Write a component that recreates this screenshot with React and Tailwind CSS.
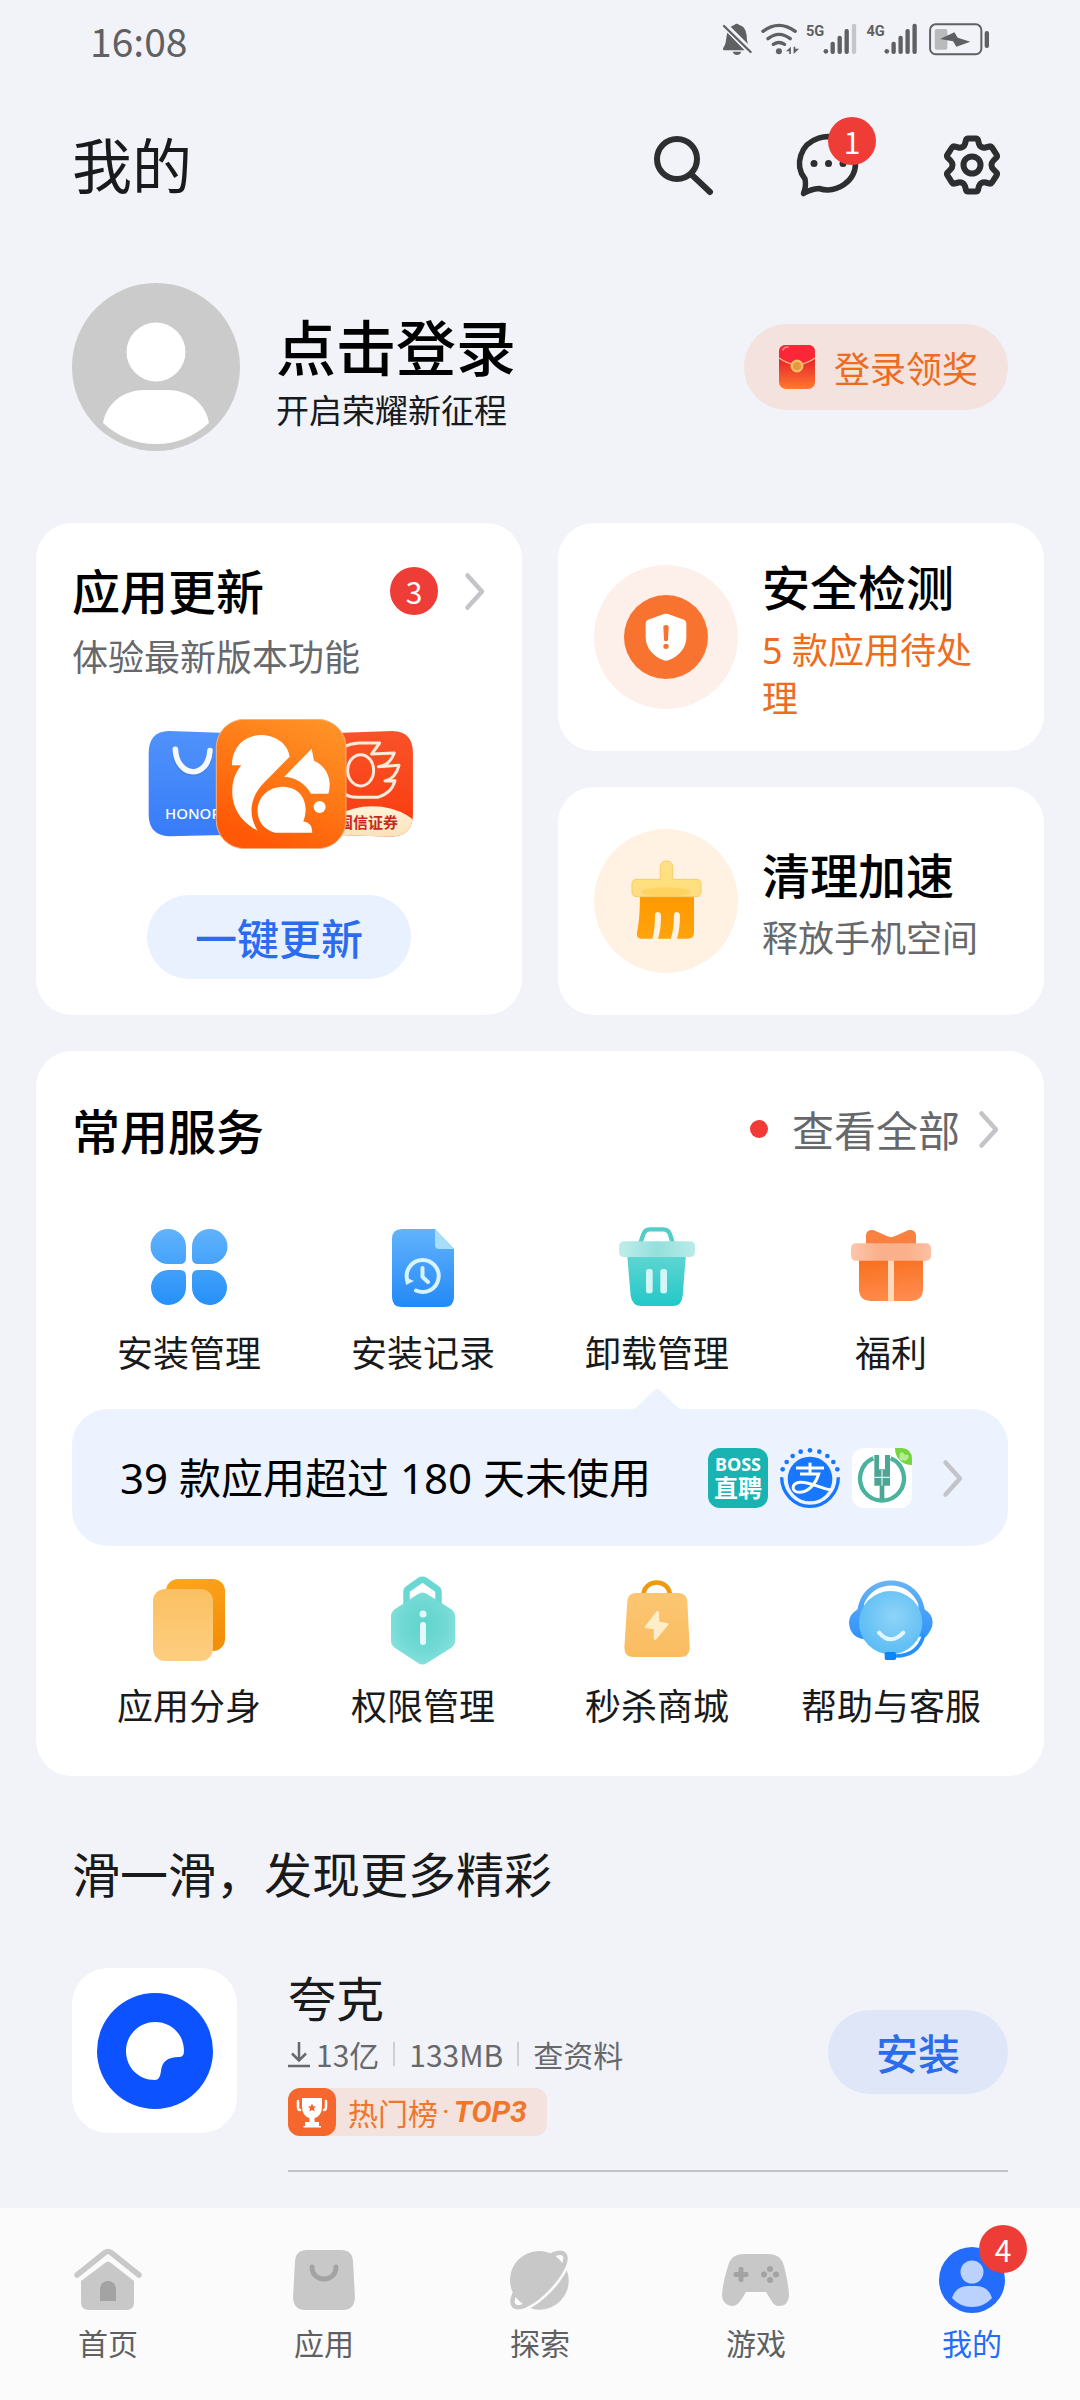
import React, { useState } from "react";

function Badge({ count, className = "" }) {
  return (
    <span
      className={`flex h-12 w-12 shrink-0 items-center justify-center rounded-full bg-[#ee3d37] text-[30px] leading-[48px] font-normal text-white ${className}`}
    >
      {count}
    </span>
  );
}

function Chevron() {
  return (
    <svg className="h-12 w-6 shrink-0" viewBox="0 0 24 48" fill="none" stroke="#c3c4c7" strokeWidth="4.500" strokeLinecap="round" strokeLinejoin="round">
      <path d="M5.500 8.500 L20 24.500 L5.500 40.500" />
    </svg>
  );
}

function StatusIcons() {
  return (
    <svg className="h-10 w-[273px]" viewBox="60 30 820 120" fill="#5f6062" aria-hidden="true">
      {/* muted bell */}
      <path d="M82 68 C78 80 80 100 70 113 Q66 121 76 121 L134 121 Z" />
      <path d="M92 50 Q98 47 103 45 Q110 37 118 45 Q138 50 140 76 Q140 92 144 102 Z" />
      <path d="M98 125 H124 Q120 135 111 135 Q102 135 98 125 Z" />
      <path d="M72 48 L152 126" stroke="#5f6062" strokeWidth="7" strokeLinecap="round" />
      {/* wifi */}
      <g fill="none" stroke="#5f6062" strokeWidth="10" strokeLinecap="round">
        <path d="M189 64 Q237 28 286 64" />
        <path d="M204 86 Q237 60 271 86" />
        <path d="M220 103 Q237 92 254 103" />
      </g>
      <circle cx="237" cy="124" r="9" />
      <path d="M273 110 V132 H268 V124 H258 Z M281 132 V110 H286 V116 H298 Z" />
      {/* first signal */}
      <text x="318" y="78" fontSize="44" fontWeight="700" fontFamily="Roboto, sans-serif">5G</text>
      <circle cx="378" cy="124" r="7" />
      <rect x="392" y="95" width="13" height="37" rx="6" />
      <rect x="413" y="77" width="13" height="55" rx="6" />
      <rect x="434" y="57" width="13" height="75" rx="6" />
      <rect x="456" y="41" width="13" height="91" rx="6" fill="#c5c6c9" />
      {/* second signal */}
      <text x="500" y="78" fontSize="44" fontWeight="700" fontFamily="Roboto, sans-serif">4G</text>
      <circle cx="561" cy="124" r="7" />
      <rect x="575" y="95" width="13" height="37" rx="6" />
      <rect x="596" y="77" width="13" height="55" rx="6" />
      <rect x="617" y="57" width="13" height="75" rx="6" />
      <rect x="638" y="41" width="13" height="91" rx="6" />
      {/* battery */}
      <rect x="691" y="43" width="154" height="90" rx="17" fill="none" stroke="#5f6062" strokeWidth="6" />
      <rect x="705" y="57" width="38" height="62" rx="6" fill="#b9babc" />
      <path d="M721 87 L764 67 L774 83 L812 95 L770 110 L760 94 Z" />
      <rect x="855" y="63" width="13" height="51" rx="6" />
    </svg>
  );
}

function SearchIcon() {
  return (
    <svg className="h-[72px] w-[72px]" viewBox="0 0 72 72" fill="none" stroke="#2c2e30" strokeLinecap="round">
      <circle cx="29" cy="30" r="20" strokeWidth="6" />
      <path d="M44 46 L62 63" strokeWidth="6" />
    </svg>
  );
}

function MessageIcon() {
  return (
    <svg className="h-[72px] w-[72px]" viewBox="0 0 72 72" fill="none" stroke="#2c2e30" strokeWidth="5.500" strokeLinejoin="round">
      <path d="M13 50 A28 26.500 0 1 1 27 59.500 Q19 60 11.500 64.500 Q14.500 57 13 50 Z" />
      <g fill="#2c2e30" stroke="none">
        <circle cx="22" cy="34.500" r="3.500" />
        <circle cx="36.500" cy="34.500" r="3.500" />
        <circle cx="51" cy="34.500" r="3.500" />
      </g>
    </svg>
  );
}

function GearIcon() {
  return (
    <svg className="h-[72px] w-[72px]" viewBox="0 0 72 72" fill="none" stroke="#2c2e30" strokeWidth="6" strokeLinejoin="round">
      <path d="M32 9.500 H40 Q41.500 9.500 42 11 L43 15 Q43.500 17 45.500 18 Q47.500 19 49.500 18.500 L53.500 17.500 Q55 17 56 18.500 L60.500 25.500 Q61.500 27 60.500 28.500 L57.500 31.500 Q55.500 33.500 55.500 36 Q55.500 38.500 57.500 40.500 L60.500 43.500 Q61.500 45 60.500 46.500 L56 53.500 Q55 55 53.500 54.500 L49.500 53.500 Q47.500 53 45.500 54 Q43.500 55 43 57 L42 61 Q41.500 62.500 40 62.500 H32 Q30.500 62.500 30 61 L29 57 Q28.500 55 26.500 54 Q24.500 53 22.500 53.500 L18.500 54.500 Q17 55 16 53.500 L11.500 46.500 Q10.500 45 11.500 43.500 L14.500 40.500 Q16.500 38.500 16.500 36 Q16.500 33.500 14.500 31.500 L11.500 28.500 Q10.500 27 11.500 25.500 L16 18.500 Q17 17 18.500 17.500 L22.500 18.500 Q24.500 19 26.500 18 Q28.500 17 29 15 L30 11 Q30.500 9.500 32 9.500 Z" />
      <circle cx="36" cy="36" r="8.500" />
    </svg>
  );
}

function Avatar() {
  return (
    <svg className="h-[168px] w-[168px] shrink-0" viewBox="0 0 168 168">
      <circle cx="84" cy="84" r="84" fill="#cbcbcb" />
      <circle cx="84" cy="69" r="29.500" fill="#fff" />
      <path d="M31 140 C34 122 50 107 72 107 H96 C118 107 134 122 137 140 Q114 161 84 161 Q54 161 31 140 Z" fill="#fff" />
    </svg>
  );
}

function RedEnvelope() {
  return (
    <svg className="h-[46px] w-[38px]" viewBox="0 0 38 46">
      <defs>
        <linearGradient id="env" x1="0" y1="0" x2="0" y2="1">
          <stop offset="0.350" stopColor="#e8262c" />
          <stop offset="1" stopColor="#ff7a2e" />
        </linearGradient>
      </defs>
      <rect x="1" y="1" width="36" height="44" rx="7" fill="url(#env)" />
      <path d="M1 8 Q1 1 8 1 H30 Q37 1 37 8 V14 Q19 26 1 14 Z" fill="#fb2638" />
      <path d="M1 14 Q19 27 37 14" fill="none" stroke="#f7c07a" strokeWidth="1.500" />
      <path d="M5 6 Q6 3 10 3" fill="none" stroke="#ff8f95" strokeWidth="1.500" strokeLinecap="round" />
      <circle cx="19" cy="22" r="6.500" fill="#f4bd62" />
      <circle cx="19" cy="22" r="4" fill="#e39a3e" />
    </svg>
  );
}

function UpdateArt() {
  return (
    <svg className="h-[130px] w-[266px]" viewBox="0 0 266 130">
      <defs>
        <linearGradient id="honor" x1="0" y1="0" x2="0" y2="1">
          <stop offset="0" stopColor="#5092fb" />
          <stop offset="1" stopColor="#377cf8" />
        </linearGradient>
        <linearGradient id="squirrel" x1="0.900" y1="0" x2="0.400" y2="1">
          <stop offset="0" stopColor="#ff9528" />
          <stop offset="0.550" stopColor="#ff7614" />
          <stop offset="1" stopColor="#ff5806" />
        </linearGradient>
        <linearGradient id="guosen" x1="0" y1="0" x2="0" y2="1">
          <stop offset="0" stopColor="#f9532a" />
          <stop offset="1" stopColor="#fa3a0c" />
        </linearGradient>
        <linearGradient id="cream" x1="0" y1="0" x2="0" y2="1">
          <stop offset="0" stopColor="#fff4da" />
          <stop offset="1" stopColor="#f5ce94" />
        </linearGradient>
        <clipPath id="guosenClip">
          <path d="M900 670 L1090 663 Q1152 664 1152 730 V910 Q1152 978 1090 980 L900 974 Z" />
        </clipPath>
      </defs>
      <g transform="scale(0.3333) translate(-357 -627)">
        <path d="M620 670 L420 663 Q359 664 359 730 V915 Q360 976 420 979 L620 974 Z" fill="url(#honor)" />
        <path d="M437 722 C440 808 540 812 544 724" fill="none" stroke="#2f68d8" strokeOpacity="0.500" strokeWidth="17" strokeLinecap="round" />
        <path d="M439 718 C444 806 538 808 543 722" fill="none" stroke="#f4f9ff" strokeWidth="17" strokeLinecap="round" />
        <g clipPath="url(#guosenClip)">
          <rect x="900" y="650" width="260" height="340" fill="url(#guosen)" />
          <ellipse cx="1030" cy="985" rx="150" ry="96" fill="url(#cream)" />
          <g fill="none" stroke="#ffeadb" strokeWidth="9" strokeLinejoin="round">
            <ellipse cx="995" cy="781" rx="39" ry="47" />
            <path d="M940 712 Q965 700 990 699 H1052 L1028 732 L1096 729 Q1080 768 1048 770 L1110 766 Q1100 805 1068 813 L1098 812 Q1088 850 1046 862 H985 Q955 862 940 845" />
          </g>
        </g>
      </g>
      <text x="17" y="100" fontSize="15" fontWeight="500" fill="#fff" fontFamily="'Noto Sans', sans-serif">HONOR</text>
      <text x="190" y="109" fontSize="15" fontWeight="700" fill="#c8291c" fontFamily="'Noto Sans CJK SC', sans-serif">国信证券</text>
      <g transform="scale(0.3333) translate(-357 -627)">
        <rect x="562" y="628" width="389" height="388" rx="84" fill="url(#squirrel)" stroke="#f3b486" strokeWidth="3" />
        <g fill="#fff">
          <path d="M609 766 C610 705 652 674 700 675 C745 678 778 705 782 740 L705 818 C664 860 655 912 686 962 C625 930 607 880 610 835 C612 805 622 785 637 766 Z" />
          <path d="M766 800 L848 716 L855 752 C885 765 903 795 902 825 Q902 840 898 851 H846 C830 822 800 802 766 800 Z" />
          <path d="M738 968 C660 950 670 832 762 830 C822 832 842 885 823 934 Q850 938 850 968 Z" />
          <circle cx="872" cy="891" r="18" />
        </g>
      </g>
    </svg>
  );
}

function ShieldIcon() {
  return (
    <svg className="h-[144px] w-[144px] shrink-0" viewBox="132 165 432 432">
      <circle cx="348" cy="381" r="216" fill="#fdefe9" />
      <circle cx="348" cy="381" r="126" fill="#f97330" />
      <path d="M342 312 Q348 310 354 312 L402 329 Q409 332 409 340 V382 C409 415 385 440 355 451 Q348 453 341 451 C311 440 287 415 287 382 V340 Q287 332 294 329 Z" fill="#fff" />
      <path d="M340 352 Q340 345 348 345 Q356 345 356 352 L354 389 Q353 394 348 394 Q343 394 342 389 Z" fill="#f97330" />
      <circle cx="348" cy="409" r="8" fill="#f97330" />
    </svg>
  );
}

function BroomIcon() {
  return (
    <svg className="h-[144px] w-[144px] shrink-0" viewBox="132 957 432 432">
      <defs>
        <linearGradient id="bristle" x1="0" y1="0" x2="0" y2="1">
          <stop offset="0" stopColor="#ff9800" />
          <stop offset="1" stopColor="#ffa40c" />
        </linearGradient>
        <linearGradient id="handle" x1="0" y1="0" x2="0" y2="1">
          <stop offset="0" stopColor="#ffe08a" />
          <stop offset="0.550" stopColor="#ffe07c" />
          <stop offset="1" stopColor="#ffdc84" />
        </linearGradient>
      </defs>
      <circle cx="348" cy="1173" r="216" fill="#fff2e2" />
      <path d="M270 1150 H432 V1270 Q430 1286 414 1286 H381 Q390 1255 390 1215 Q388 1206 379 1206 Q372 1207 372 1215 Q372 1260 362 1286 H324 Q334 1255 333 1215 Q331 1206 323 1206 Q315 1207 315 1215 Q315 1260 307 1286 H274 Q258 1284 261 1268 Q270 1230 270 1150 Z" fill="url(#bristle)" />
      <path d="M331 1070 Q332 1053 349 1053 Q367 1053 368 1070 V1108 H438 Q453 1108 453 1122 V1146 Q453 1160 438 1160 H261 Q246 1160 246 1146 V1122 Q246 1108 261 1108 H331 Z" fill="url(#handle)" stroke="#f6cc68" strokeWidth="3" />
      <ellipse cx="348" cy="1146" rx="74" ry="14" fill="#ffcb45" opacity="0.550" />
    </svg>
  );
}

function CloverIcon() {
  return (
    <svg className="h-24 w-24" viewBox="0 0 96 96">
      <defs>
        <linearGradient id="clover" gradientUnits="userSpaceOnUse" x1="0" y1="10" x2="0" y2="86">
          <stop offset="0" stopColor="#61b3fc" />
          <stop offset="1" stopColor="#2590f9" />
        </linearGradient>
      </defs>
      <g fill="url(#clover)">
        <path d="M27 10 A17.500 17.500 0 0 1 45 27.500 V39 Q45 45 39 45 H27 A17.500 17.500 0 0 1 27 10 Z" />
        <path d="M69 10 A17.500 17.500 0 0 1 69 45 H57 Q51 45 51 39 V27.500 A17.500 17.500 0 0 1 69 10 Z" />
        <path d="M27 51 H39 Q45 51 45 57 V68.500 A17.500 17.500 0 1 1 27 51 Z" />
        <path d="M57 51 H69 A17.500 17.500 0 1 1 51 68.500 V57 Q51 51 57 51 Z" />
      </g>
    </svg>
  );
}

function RecordIcon() {
  return (
    <svg className="h-24 w-24" viewBox="0 0 96 96">
      <defs>
        <linearGradient id="record" x1="0" y1="0" x2="0" y2="1">
          <stop offset="0" stopColor="#62b3fd" />
          <stop offset="1" stopColor="#2389f6" />
        </linearGradient>
      </defs>
      <path d="M27 10 H60 L79 30 V78 Q79 88 69 88 H27 Q17 88 17 78 V20 Q17 10 27 10 Z" fill="url(#record)" />
      <path d="M60 10 L79 30 H64 Q60 30 60 26 Z" fill="#a8dcfb" />
      <g fill="none" stroke="#d7f3fe" strokeWidth="4" strokeLinecap="round" strokeLinejoin="round">
        <path d="M32.500 62 A16 16 0 1 1 41 71.500" />
        <path d="M47.500 49 V58 L53 63" />
      </g>
      <path d="M30 58 L39 62 L31 66 Z" fill="#d7f3fe" />
    </svg>
  );
}

function TrashIcon() {
  return (
    <svg className="h-24 w-24" viewBox="27 12 288 288">
      <defs>
        <linearGradient id="bin" x1="0" y1="0" x2="0" y2="1">
          <stop offset="0" stopColor="#62d6d2" />
          <stop offset="1" stopColor="#22c8c8" />
        </linearGradient>
        <linearGradient id="lid" x1="0" y1="0" x2="1" y2="0">
          <stop offset="0" stopColor="#c0edea" />
          <stop offset="0.500" stopColor="#93e0dc" />
          <stop offset="1" stopColor="#b9ebe9" />
        </linearGradient>
      </defs>
      <path d="M121 84 L130 58 Q135 43 150 43 H190 Q205 43 210 58 L218 84" fill="none" stroke="#54cdc8" strokeWidth="13" />
      <path d="M81 115 H258 L248 242 Q245 273 218 273 H124 Q97 273 92 242 Z" fill="url(#bin)" />
      <rect x="57" y="79" width="228" height="47" rx="14" fill="url(#lid)" />
      <rect x="138" y="162" width="20" height="73" rx="8" fill="#d2f7f6" />
      <rect x="181" y="162" width="20" height="73" rx="8" fill="#d2f7f6" />
    </svg>
  );
}

function GiftIcon() {
  return (
    <svg className="h-24 w-24" viewBox="729 12 288 288">
      <defs>
        <linearGradient id="gift" x1="0.400" y1="0" x2="0.600" y2="1">
          <stop offset="0" stopColor="#f7711f" />
          <stop offset="1" stopColor="#ff8c50" />
        </linearGradient>
        <linearGradient id="giftLid" x1="0" y1="0" x2="1" y2="0">
          <stop offset="0" stopColor="#fcc6ac" />
          <stop offset="0.350" stopColor="#fab08b" />
          <stop offset="0.700" stopColor="#fab08b" />
          <stop offset="1" stopColor="#fcc0a3" />
        </linearGradient>
      </defs>
      <path d="M798 95 V60 Q800 43 820 45 L862 64 Q873 69 884 64 L926 45 Q945 43 948 60 V95 Z" fill="#fa8140" />
      <path d="M777 130 H969 V226 Q967 258 935 258 H811 Q779 258 777 226 Z" fill="url(#gift)" />
      <rect x="864" y="130" width="18" height="128" fill="#ffd9bd" />
      <rect x="753" y="85" width="240" height="52" rx="14" fill="url(#giftLid)" />
    </svg>
  );
}

function CloneIcon() {
  return (
    <svg className="h-24 w-24" viewBox="0 0 96 96">
      <defs>
        <linearGradient id="cloneBack" x1="0" y1="0" x2="0.300" y2="1">
          <stop offset="0" stopColor="#ffa51e" />
          <stop offset="1" stopColor="#f39008" />
        </linearGradient>
        <linearGradient id="cloneFront" x1="0" y1="0" x2="0" y2="1">
          <stop offset="0" stopColor="#fbc062" />
          <stop offset="1" stopColor="#fdce80" />
        </linearGradient>
      </defs>
      <rect x="25" y="7" width="59" height="72" rx="12" fill="url(#cloneBack)" />
      <rect x="12" y="17" width="60" height="72" rx="12" fill="url(#cloneFront)" />
    </svg>
  );
}

function PermissionIcon() {
  return (
    <svg className="h-24 w-24" viewBox="0 0 96 96">
      <defs>
        <radialGradient id="perm" cx="0.500" cy="0.450" r="0.650">
          <stop offset="0" stopColor="#5fd3cd" />
          <stop offset="0.600" stopColor="#74dad5" />
          <stop offset="1" stopColor="#8fe5e2" />
        </radialGradient>
      </defs>
      <path d="M31.500 38 V20 Q31.500 18 33 17 L45 8.500 Q47.500 7 50 8.500 L62 17 Q63.500 18 63.500 20 V38" fill="none" stroke="#69d7d2" strokeWidth="6.500" />
      <path d="M43 22 Q47.500 19 52 22 L76 37 Q80 40 80 44 V69 Q80 73 76 76 L52 91 Q47.500 94 43 91 L20 76 Q16 73 16 69 V44 Q16 40 20 37 Z" fill="url(#perm)" />
      <circle cx="48" cy="42" r="3.500" fill="#e3faf8" />
      <rect x="45" y="50" width="6" height="23" rx="3" fill="#e3faf8" />
    </svg>
  );
}

function FlashBagIcon() {
  return (
    <svg className="h-24 w-24" viewBox="27 1068 288 288">
      <defs>
        <linearGradient id="flashBag" x1="0" y1="0" x2="0" y2="1">
          <stop offset="0" stopColor="#fbc673" />
          <stop offset="1" stopColor="#fabc60" />
        </linearGradient>
      </defs>
      <path d="M130 1140 C130 1086 210 1086 210 1140" fill="none" stroke="#ee9a0c" strokeWidth="14" />
      <path d="M106 1131 H236 Q260 1132 262 1156 L269 1296 Q268 1323 242 1323 H100 Q74 1323 73 1296 L82 1156 Q84 1132 106 1131 Z" fill="url(#flashBag)" />
      <path d="M170 1186 L135 1231 Q132 1236 139 1237 L162 1240 L161 1267 Q163 1275 169 1270 L204 1228 Q207 1222 201 1221 L178 1217 L177 1190 Q175 1183 170 1186 Z" fill="#ffecc8" />
    </svg>
  );
}

function SupportIcon() {
  return (
    <svg className="h-24 w-24" viewBox="729 1068 288 288">
      <defs>
        <radialGradient id="face" cx="0.550" cy="0.400" r="0.650">
          <stop offset="0" stopColor="#8ed4f8" />
          <stop offset="1" stopColor="#57bbf4" />
        </radialGradient>
        <linearGradient id="phone" x1="0" y1="0" x2="0" y2="1">
          <stop offset="0" stopColor="#68b4f6" />
          <stop offset="1" stopColor="#2f92fb" />
        </linearGradient>
      </defs>
      <path d="M773 1180 C790 1065 956 1065 974 1180 Q998 1196 998 1218 Q998 1240 978 1262 L955 1262 V1164 C925 1090 822 1090 792 1164 V1270 Q748 1262 747 1218 Q747 1196 773 1180 Z" fill="url(#phone)" />
      <circle cx="872" cy="1220" r="95" fill="url(#face)" />
      <path d="M972 1255 C960 1300 930 1320 888 1320" fill="none" stroke="#2490fb" strokeWidth="11" />
      <path d="M837 1250 Q872 1290 910 1250" fill="none" stroke="#e3f6ff" strokeWidth="12" strokeLinecap="round" />
      <rect x="854" y="1308" width="34" height="24" rx="5" fill="#0b86f9" />
    </svg>
  );
}

function BossLogo() {
  return (
    <svg className="h-[60px] w-[60px]" viewBox="0 0 60 60" fill="#fff" textAnchor="middle" fontWeight="700">
      <rect width="60" height="60" rx="12" fill="#19b3b2" />
      <text x="30" y="23" fontSize="18" fontFamily="'Noto Sans', sans-serif">BOSS</text>
      <text x="30" y="49" fontSize="24" fontFamily="'Noto Sans CJK SC', sans-serif">直聘</text>
    </svg>
  );
}

function AlipayLogo() {
  return (
    <svg className="h-[60px] w-[60px]" viewBox="240 39 180 180">
      <circle cx="330" cy="132" r="67" fill="#1777ff" />
      <path d="M245 127 A85 87 0 0 0 415 127" fill="none" stroke="#1777ff" strokeWidth="10" />
      <g fill="#1777ff">
        <circle cx="248" cy="103" r="7" />
        <circle cx="260" cy="81" r="7" />
        <circle cx="278" cy="63" r="7" />
        <circle cx="302" cy="50" r="7" />
        <circle cx="330" cy="46" r="7" />
        <circle cx="358" cy="50" r="7" />
        <circle cx="382" cy="63" r="7" />
        <circle cx="400" cy="81" r="7" />
        <circle cx="412" cy="103" r="7" />
      </g>
      <g fill="none" stroke="#fff" strokeWidth="9">
        <path d="M288 99 H372" />
        <path d="M330 83 V117" />
        <path d="M300 117 H356 C346 150 322 172 298 172 C274 172 272 145 300 142 C330 140 360 160 396 166" />
      </g>
    </svg>
  );
}

function BankLogo() {
  return (
    <svg className="h-[60px] w-[60px]" viewBox="456 39 180 180">
      <rect x="456" y="39" width="180" height="180" rx="36" fill="#fff" />
      <path d="M520 70 A66 66 0 1 0 572 70" fill="none" stroke="#4bb29d" strokeWidth="13" />
      <path d="M523 60 H537 V103 H555 V60 H570 V152 H553 V192 H539 V152 H523 Z" fill="#4da694" />
      <path d="M523 127 H570 M546 105 V152" stroke="#fff" strokeWidth="3" />
      <path d="M585 39 H606 Q636 42 636 72 V90 C605 90 585 68 585 39 Z" fill="#74d63c" />
      <path d="M600 54 Q610 48 614 60 Q626 56 626 66 Q620 80 610 76 Q598 80 598 66 Z" fill="#b4eb94" />
    </svg>
  );
}

function QuarkLogo() {
  return (
    <svg className="h-[165px] w-[165px] shrink-0" viewBox="0 0 165 165">
      <rect width="165" height="165" rx="36" fill="#fff" />
      <circle cx="83" cy="83" r="58" fill="#0c53ff" />
      <path d="M83 54 C100 54 112 67 112 83 Q112 89 107 89 C95 89 90 94 89 103 Q88 112 83 112 C66 112 54 99 54 83 C54 67 67 54 83 54 Z" fill="#fff" />
    </svg>
  );
}

function TrophyIcon() {
  return (
    <svg className="h-12 w-12 shrink-0" viewBox="0 0 48 48">
      <rect width="48" height="48" rx="12" fill="#f5672c" />
      <path d="M14 10 H34 V18 Q34 28 26.500 30 V34 H31 V38 H33 V39.500 H15.500 V38 H17 V34 H21.500 V30 Q14 28 14 18 Z" fill="#fff" />
      <path d="M10 13 V19 Q10 22 12 22 M38 13 V19 Q38 22 36 22" fill="none" stroke="#fff" strokeWidth="2.500" strokeLinecap="round" />
      <path d="M24 15.500 L25.300 18.300 L28 18.500 L26 20.500 L26.700 23.500 L24 22 L21.300 23.500 L22 20.500 L20 18.500 L22.700 18.300 Z" fill="#f5672c" />
    </svg>
  );
}

function DownloadIcon() {
  return (
    <svg className="h-[30px] w-[22px]" viewBox="0 0 22 30" fill="none" stroke="#66686b" strokeWidth="2.500">
      <path d="M11 3 V21 M4 14.500 L11 21.500 L18 14.500 M0 27 H22" />
    </svg>
  );
}

function HomeTabIcon() {
  return (
    <svg className="h-[72px] w-[72px]" viewBox="0 0 72 72">
      <path d="M5 31 L33 8.500 Q36 6.500 39 8.500 L67 31" fill="none" stroke="#c8c8c8" strokeWidth="5.500" strokeLinecap="round" />
      <path d="M33 19 Q36 16 39 19 L62 37 V58 Q62 66 54 66 H17 Q9 66 9 58 V37 Z" fill="#c8c8c8" />
      <path d="M28 57 V45 A8 8 0 0 1 44 45 V57 Z" fill="#a3a3a3" />
    </svg>
  );
}

function AppsTabIcon() {
  return (
    <svg className="h-[72px] w-[72px]" viewBox="0 0 72 72">
      <path d="M19 6 H53 Q64 6 65 17 L67 54 Q66 66 55 66 H17 Q6 66 5 54 L7 17 Q8 6 19 6 Z" fill="#c8c8c8" />
      <path d="M24 23 C24 39 48 39 48 23" fill="none" stroke="#a3a3a3" strokeWidth="5" strokeLinecap="round" />
    </svg>
  );
}

function ExploreTabIcon() {
  return (
    <svg className="h-[72px] w-[72px]" viewBox="0 0 72 72">
      <defs>
        <clipPath id="globeTop">
          <rect x="-10" y="-10" width="92" height="46" />
          <ellipse cx="35" cy="36" rx="38" ry="13" />
        </clipPath>
      </defs>
      <g transform="rotate(-46 35 36)">
        <circle cx="35" cy="37" r="29" fill="#c8c8c8" />
        <ellipse cx="35" cy="36" rx="42" ry="17" fill="#fbfbfb" />
        <ellipse cx="35" cy="36" rx="36" ry="12" fill="none" stroke="#c8c8c8" strokeWidth="4.500" />
        <circle cx="35" cy="36" r="29" fill="#c8c8c8" clipPath="url(#globeTop)" />
      </g>
    </svg>
  );
}

function GamesTabIcon() {
  return (
    <svg className="h-[72px] w-[72px]" viewBox="0 0 72 72">
      <path d="M24 10 H48 Q61 10 64 22 Q69 42 69 52 Q68 62 59 62 Q54 62 51 56 L46 48 H26 L21 56 Q17 62 12 62 Q3 61 2 52 Q2 42 8 22 Q11 10 24 10 Z" fill="#c8c8c8" />
      <g fill="#a3a3a3">
        <rect x="13.500" y="28" width="15" height="5" rx="2" />
        <rect x="18.500" y="23" width="5" height="15" rx="2" />
        <circle cx="50" cy="25" r="3" />
        <circle cx="50" cy="36" r="3" />
        <circle cx="44" cy="30.500" r="3" />
        <circle cx="56" cy="30.500" r="3" />
      </g>
    </svg>
  );
}

function MineTabIcon() {
  return (
    <svg className="h-[72px] w-[72px]" viewBox="0 0 72 72">
      <circle cx="36" cy="36" r="33" fill="#246cfb" />
      <circle cx="36" cy="28" r="11.500" fill="#bcd2fe" />
      <path d="M16 54 Q20 42 32 42 H40 Q52 42 56 54 Q48 63 36 63 Q24 63 16 54 Z" fill="#bcd2fe" />
    </svg>
  );
}

const topServices = [
  { label: "安装管理", Icon: CloverIcon },
  { label: "安装记录", Icon: RecordIcon },
  { label: "卸载管理", Icon: TrashIcon },
  { label: "福利", Icon: GiftIcon },
];

const bottomServices = [
  { label: "应用分身", Icon: CloneIcon },
  { label: "权限管理", Icon: PermissionIcon },
  { label: "秒杀商城", Icon: FlashBagIcon },
  { label: "帮助与客服", Icon: SupportIcon },
];

const tabs = [
  { id: "home", label: "首页", Icon: HomeTabIcon },
  { id: "apps", label: "应用", Icon: AppsTabIcon },
  { id: "explore", label: "探索", Icon: ExploreTabIcon },
  { id: "games", label: "游戏", Icon: GamesTabIcon },
  { id: "mine", label: "我的", Icon: MineTabIcon, badge: 4 },
];

function ServiceRow({ items }) {
  return (
    <div className="grid grid-cols-4">
      {items.map(({ label, Icon }) => (
        <button key={label} type="button" className="flex flex-col items-center gap-3 text-[36px] leading-[48px] whitespace-nowrap text-[#191a1c]">
          <Icon />
          {label}
        </button>
      ))}
    </div>
  );
}

function ToolCard({ icon, title, text, textClass }) {
  return (
    <button type="button" className="flex flex-1 items-center gap-6 rounded-[36px] bg-white pr-11 pl-9 text-left">
      {icon}
      <span className="flex flex-1 flex-col gap-1 pb-1">
        <span className="text-[48px] leading-[76px] font-medium text-black">{title}</span>
        <span className={`font-['Noto_Sans','Noto_Sans_CJK_SC',sans-serif] text-[36px] leading-[48px] ${textClass}`}>{text}</span>
      </span>
    </button>
  );
}

export default function App() {
  const [activeTab, setActiveTab] = useState("mine");

  return (
    <div className="flex min-h-screen flex-col bg-[#f1f3f8] font-['Noto_Sans_CJK_SC',sans-serif] text-[#191a1c]">
      <div className="flex h-20 items-center justify-between pr-[87px] pl-[90px]">
        <span className="text-[39px] leading-[48px] text-[#5f6062]">16:08</span>
        <StatusIcons />
      </div>

      <header className="mt-[45px] flex h-20 items-center justify-between px-[72px]">
        <h1 className="pb-1 text-[60px] leading-[76px]">我的</h1>
        <div className="flex gap-[72px]">
          <button type="button" aria-label="搜索">
            <SearchIcon />
          </button>
          <button type="button" aria-label="消息" className="relative">
            <MessageIcon />
            <Badge count={1} className="absolute -top-3 left-9" />
          </button>
          <button type="button" aria-label="设置">
            <GearIcon />
          </button>
        </div>
      </header>

      <main className="flex flex-1 flex-col">
        <section className="mt-[78px] flex items-center px-[72px]">
          <button type="button" className="flex items-center gap-9 text-left">
            <Avatar />
            <span className="flex flex-col pt-1">
              <span className="text-[60px] leading-[80px] font-medium text-black">点击登录</span>
              <span className="text-[33px] leading-[48px]">开启荣耀新征程</span>
            </span>
          </button>
          <button type="button" className="ml-auto flex h-[86px] w-[264px] items-center justify-center gap-[18px] rounded-full bg-[#f3e2dd] pl-1 text-[36px] leading-[48px] text-[#ee6c1e]">
            <RedEnvelope />
            登录领奖
          </button>
        </section>

        <section className="mt-[72px] grid grid-cols-2 gap-9 px-9">
          <div className="flex flex-col rounded-[36px] bg-white px-9 pt-[30px] pb-9">
            <div className="flex items-center">
              <h2 className="pb-1 text-[48px] leading-[72px] font-medium text-black">应用更新</h2>
              <Badge count={3} className="ml-auto" />
              <button type="button" aria-label="应用更新" className="ml-6">
                <Chevron />
              </button>
            </div>
            <p className="mt-0.5 text-[36px] leading-[48px] text-[#66686b]">体验最新版本功能</p>
            <div className="mt-10 flex justify-center pl-1">
              <UpdateArt />
            </div>
            <button type="button" className="mx-auto mt-[46px] h-[84px] w-[264px] rounded-full bg-[#e9f0fe] text-[42px] leading-[84px] font-medium text-[#2b6cee]">
              一键更新
            </button>
          </div>
          <div className="flex flex-col gap-9">
            <ToolCard icon={<ShieldIcon />} title="安全检测" text="5 款应用待处理" textClass="text-[#ee6c1e]" />
            <ToolCard icon={<BroomIcon />} title="清理加速" text="释放手机空间" textClass="text-[#66686b]" />
          </div>
        </section>

        <section className="mx-9 mt-9 rounded-[36px] bg-white px-9 pt-[46px] pb-12">
          <div className="flex h-16 items-center justify-between">
            <h2 className="text-[48px] leading-[64px] font-medium text-black">常用服务</h2>
            <button type="button" className="flex items-center pr-2 text-[42px] leading-[64px] text-[#66686b]">
              <span className="mr-6 h-[18px] w-[18px] rounded-full bg-[#f23a36]" />
              查看全部
              <span className="ml-4 flex">
                <Chevron />
              </span>
            </button>
          </div>
          <div className="mt-[58px]">
            <ServiceRow items={topServices} />
          </div>
          <button
            type="button"
            className="relative mt-[34px] flex h-[137px] w-full items-center rounded-[36px] bg-[#ecf2fe] pr-11 pl-12 font-['Noto_Sans','Noto_Sans_CJK_SC',sans-serif] text-[42px] leading-[64px] text-black"
          >
            <svg className="absolute -top-[21px] left-[62.500%] h-[22px] w-[56px] -translate-x-1/2" viewBox="0 0 56 22" fill="#ecf2fe">
              <path d="M0 22 Q6 21 10 17 L24 3 Q28 -1 32 3 L46 17 Q50 21 56 22 Z" />
            </svg>
            39 款应用超过 180 天未使用
            <span className="ml-auto flex gap-3">
              <BossLogo />
              <AlipayLogo />
              <BankLogo />
            </span>
            <span className="ml-7 flex">
              <Chevron />
            </span>
          </button>
          <div className="mt-[26px]">
            <ServiceRow items={bottomServices} />
          </div>
        </section>

        <section className="mt-[60px] px-[72px]">
          <h2 className="text-[48px] leading-[72px]">滑一滑，发现更多精彩</h2>
          <div className="mt-[60px] flex gap-[51px]">
            <QuarkLogo />
            <div className="flex flex-1 items-center border-b-2 border-[#c0c2c6] pb-[34px]">
              <div className="flex flex-col items-start">
                <h3 className="text-[48px] leading-[56px]">夸克</h3>
                <p className="mt-2 flex items-center text-[30px] leading-[44px] text-[#66686b]">
                  <DownloadIcon />
                  <span className="ml-1.5">13亿</span>
                  <span className="mx-3.5 h-6 w-0.5 bg-[#cdcfd3]" />
                  <span>133MB</span>
                  <span className="mx-3.5 h-6 w-0.5 bg-[#cdcfd3]" />
                  <span>查资料</span>
                </p>
                <p className="mt-3 flex items-center rounded-xl bg-[#f3e2dd] pr-5 text-[30px] leading-[48px] text-[#f0762c]">
                  <TrophyIcon />
                  <span className="ml-3">热门榜</span>
                  <span className="mx-1 font-['Roboto',sans-serif]">·</span>
                  <strong className="font-['Roboto',sans-serif] font-bold italic">TOP3</strong>
                </p>
              </div>
              <button type="button" className="ml-auto h-[84px] w-[180px] rounded-full bg-[#dfe6f7] text-[42px] leading-[84px] font-medium text-[#2b6cee]">
                安装
              </button>
            </div>
          </div>
        </section>
      </main>

      <nav className="sticky bottom-0 grid h-48 grid-cols-5 bg-[#fbfbfb] pt-9">
        {tabs.map(({ id, label, Icon, badge }) => (
          <button
            key={id}
            type="button"
            onClick={() => setActiveTab(id)}
            className={`flex flex-col items-center gap-0.5 text-[30px] leading-[48px] ${activeTab === id ? "text-[#246cfb]" : "text-[#5f6062]"}`}
          >
            <span className="relative">
              <Icon />
              {badge && <Badge count={badge} className="absolute -top-[19px] left-[43px]" />}
            </span>
            {label}
          </button>
        ))}
      </nav>
    </div>
  );
}
